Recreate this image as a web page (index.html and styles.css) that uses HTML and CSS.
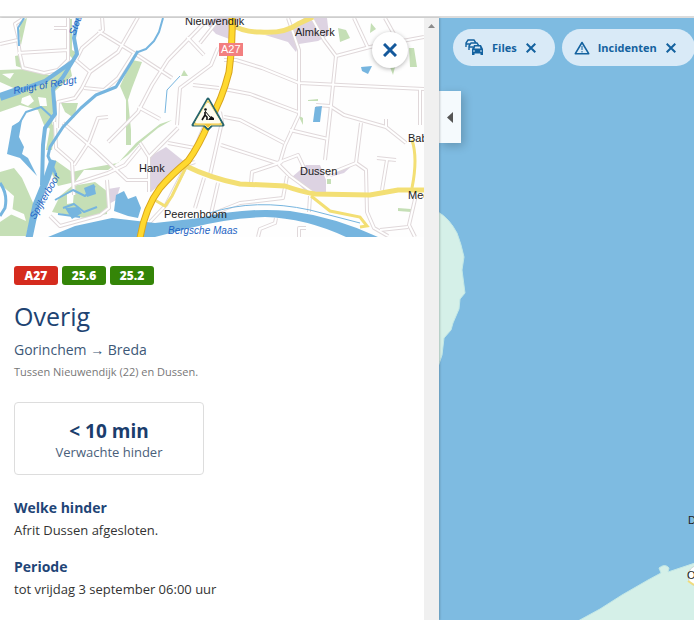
FILE: index.html
```html
<!DOCTYPE html>
<html lang="nl">
<head>
    <meta charset="UTF-8">
    <meta name="viewport" content="width=device-width, initial-scale=1.0">
    <title>Verkeersinformatie</title>
    <link rel="stylesheet" href="styles.css">
</head>
<body>

    <header class="topbar"></header>

    <main class="layout">
        <aside class="panel">
            <div class="panel-content">
                <div class="minimap">
                    <svg class="minimap-svg" viewBox="0 18 424 219" role="img" aria-label="Kaart A27 bij Hank">
                        <defs>
                            <g id="roads">
                                <path d="M102 17L103 30L82 48L76 60L90 72L82 88L75 98L58 102L57 128"/>
                                <path d="M98 31L134 53L172 78M138 17L118 52L90 72M134 53L118 78L104 90L84 88"/>
                                <path d="M0 44L18 40L20 55L23 68L44 73L58 70L68 60V18M18 53L68 50M24 18L15 24L19 40M54 28H68"/>
                                <path d="M204 23L168 60L152 85L138 112L108 142M187 37L204 55"/>
                                <path d="M218 48L211 65L180 88L177 125M193 85L219 88"/>
                                <path d="M138 107L160 119M108 117L98 118L89 142L74 165M55 122L56 148L72 162L74 195"/>
                                <path d="M63 123L95 150L127 180L150 180M74 184L108 173L125 165L140 147"/>
                                <path d="M107 180L109 208L100 215L60 226L50 216M140 143L149 157L149 192"/>
                                <path d="M149 157L178 128M168 143L195 148L212 108M177 168L195 162"/>
                                <path d="M200 43L216 23M288 18L299 50L299 85L299 115L285 145L279 165L290 176L312 192"/>
                                <path d="M224 60L236 60L262 68L299 83L424 89M224 89L250 94L298 112M220 112L222 122L210 175"/>
                                <path d="M324 40L336 56L333 85L330 115L325 160M336 56L370 47L424 37"/>
                                <path d="M312 18L324 40M354 18L368 48M385 18L395 36M420 89V125"/>
                                <path d="M316 105L330 106L344 115L386 127L406 143M386 119V128M361 123L356 163L326 175"/>
                                <path d="M221 145L277 163L298 155L305 170M290 130L328 139M224 117L240 120L284 143"/>
                                <path d="M251 183L252 172L282 162M356 163L366 170L367 212L374 228L388 236"/>
                                <path d="M377 158L396 160M387 160L382 190M416 195L409 225L415 237M408 227L380 230"/>
                                <path d="M310 196L309 212M287 176L283 198L240 203L212 214M218 183L211 214"/>
                                <path d="M258 237L260 229L275 223L276 218M299 237L299 228L306 228"/>
                                <path d="M185 168L166 205L150 222M204 178L195 208"/>
                            </g>
                            <path id="a27" d="M232 17Q233 45 229 72Q222 100 209 122Q199 146 188 161Q171 175 160 188Q145 208 140 238"/>
                        </defs>

                        <rect y="17" width="424" height="221" fill="#fefefe"/>

                        <g class="green">
                            <path d="M0 70L30 69L52 76L70 66L72 76L54 92L52 130L44 125L38 110L20 105L0 112L0 97L18 90L0 82Z"/>
                            <path d="M0 172L14 168L22 178L34 205L26 236H0V222L12 214L14 196L0 184Z"/>
                            <path d="M132 60L142 62L132 88L128 100L131 130L131 145L126 145L126 100L120 86Z"/>
                            <path d="M172 120L158 128L140 143L128 155L108 170L84 170L75 182L58 186L50 170L55 160L72 172L90 168L118 163L136 143L160 124Z"/>
                            <path d="M72 186L95 182L108 192L107 214L84 218L52 212L60 196Z"/>
                            <path d="M338 28L346 30L350 38L340 42ZM371 23L376 29L370 33ZM409 48H414L417 67H410ZM390 67H395L393 75Z"/>
                            <path d="M181 76L184 70L188 76ZM61 103L78 103L74 118L65 112ZM15 56L20 55L22 68L16 66ZM22 20L27 18L21 45L17 38Z"/>
                            <path d="M298 115L303 118V125ZM308 100L318 99V101H308ZM327 179H331V184H327ZM398 208L411 209V212L398 211Z"/>
                            <path d="M66 19H72L72 50L79 54L74 60L66 52ZM50 128L56 120L52 150L46 150Z"/>
                        </g>
                        <g fill="#fefefe">
                            <path d="M22 98L30 95L34 101L28 106L21 103ZM38 97L46 98L47 106L40 106ZM2 74L14 73L10 79Z"/>
                            <path d="M67 194L74 191L73 203L67 204ZM5 206L24 214L26 221L8 213Z"/>
                        </g>
                        <g class="town">
                            <path d="M149 157L166 147L186 163L168 178L151 192Z"/>
                            <path d="M205 22L218 17H240L232 40L216 34Z"/>
                            <path d="M265 35L284 32L304 18H327L329 35L318 41L299 44L296 52L288 42Z"/>
                            <path d="M292 177L306 165H320L326 180V194L306 192ZM341 169L355 163L344 173L330 177ZM108 189L120 187L116 200L109 204Z"/>
                        </g>

                        <use href="#roads" class="road-edge"/>
                        <use href="#roads" class="road"/>

                        <g class="water-line">
                            <path stroke-width="4" d="M78 17L74 38L77 54L63 77L53 89L55 114L45 128L43 145L42 185"/>
                            <path stroke-width="7" d="M53 160L47 178L36 205L29 238"/>
                            <path stroke-width="8" d="M0 97L20 90"/>
                            <path stroke-width="4" d="M18 91L45 81L72 62"/>
                            <path stroke-width="2" d="M163 18L159 32L154 41L146 49L138 52"/>
                            <path stroke-width="3" d="M138 51L129 66L116 87L96 95L81 108L63 127L50 147L48 156L56 175"/>
                            <path stroke-width="2" d="M24 18L18 28L19 46M16 129L26 112L41 107L53 118"/>
                            <path stroke-width="1" d="M180 76L167 90L165 113M210 213Q255 198 310 210L360 223"/>
                            <path stroke-width="2" d="M55 200L73 190L85 196L95 186M63 208L74 204L84 212L97 207M58 214L80 217"/>
                            <path stroke-width="3" d="M0 183Q8 194 5 208L0 216"/>
                        </g>
                        <g class="water">
                            <path d="M12 126L22 120L19 137L24 147L22 154L28 158L37 176L20 158L7 154Z"/>
                            <path d="M116 195L124 191L128 199L136 196L141 208L138 218L128 216L114 211Z"/>
                            <path d="M84 188L94 184L96 194L87 197ZM65 208L78 207L82 213L72 219Z"/>
                            <path d="M315 107L322 106L320 122L313 122ZM361 67L372 66L368 74L362 71Z"/>
                            <path d="M48 237L75 226L112 218L155 223L200 218Q245 207 290 211Q335 217 378 237H346Q305 218 265 217Q228 218 190 228L155 237Z"/>
                        </g>

                        <g class="main-road">
                            <path d="M231 24Q242 32 260 32Q284 34 298 24L313 17"/>
                            <path d="M186 166Q210 178 240 184L285 186Q302 192 315 194L370 195L398 190H424"/>
                            <path class="thin" d="M186 167L172 196L165 206L153 199M311 196L330 211L360 217L367 226L360 227M412 140Q418 158 412 188"/>
                        </g>
                        <use href="#a27" class="highway-edge"/>
                        <use href="#a27" class="highway"/>

                        <rect x="219" y="43" width="24" height="13" fill="#f27f80"/>
                        <text class="road-label" x="221" y="53">A27</text>

                        <g class="place">
                            <text x="185" y="25">Nieuwendijk</text>
                            <text x="295" y="36">Almkerk</text>
                            <text x="139" y="172">Hank</text>
                            <text x="300" y="175">Dussen</text>
                            <text x="164" y="218">Peerenboom</text>
                            <text x="408" y="142">Babyloniënbroek</text>
                            <text x="408" y="199">Meeuwen</text>
                        </g>
                        <g class="river">
                            <text x="168" y="234">Bergsche Maas</text>
                            <text transform="translate(14 94) rotate(-10)">Ruigt of Reugt</text>
                            <text transform="translate(35 220) rotate(-60)">Spijkerboor</text>
                            <text transform="translate(75 36) rotate(-70)">Steurgat</text>
                        </g>

                        <g stroke-linejoin="round">
                            <path d="M208 99L223 125H212L208 129L204 125H193Z" fill="#28666e" stroke="#28666e" stroke-width="3"/>
                            <path d="M208 100L222 125H211L208 128L205 125H194Z" fill="#f3c63a" stroke="#f3e08a"/>
                            <path d="M208 104L219 122H197Z" fill="#fffdf0" stroke="#fffdf0" stroke-width="3"/>
                            <circle cx="205.500" cy="109.500" r="1.300" fill="#111"/>
                            <path d="M205 112L205 115L207 117V120M205 115L202 120" fill="none" stroke="#111" stroke-width="1.600"/>
                            <path d="M205 111L210 117" stroke="#111"/>
                            <path d="M208 120L211 116L214 118V120Z" fill="#111"/>
                        </g>
                    </svg>
                    <button class="close-button" aria-label="Sluiten">
                        <svg viewBox="0 0 14 14" width="14" height="14"><path d="M1 1L13 13M13 1L1 13" stroke="#14599c" stroke-width="3"/></svg>
                    </button>
                </div>

                <section class="details">
                    <div class="badges">
                        <span class="badge badge-road">A27</span>
                        <span class="badge">25.6</span>
                        <span class="badge">25.2</span>
                    </div>
                    <h1>Overig</h1>
                    <p class="route">Gorinchem → Breda</p>
                    <p class="location">Tussen Nieuwendijk (22) en Dussen.</p>

                    <div class="delay">
                        <strong>&lt; 10 min</strong>
                        <span>Verwachte hinder</span>
                    </div>

                    <h2>Welke hinder</h2>
                    <p class="text">Afrit Dussen afgesloten.</p>
                    <h2>Periode</h2>
                    <p class="text">tot vrijdag 3 september 06:00 uur</p>
                </section>
            </div>
            <div class="scrollbar">
                <svg viewBox="0 0 7 4" width="7" height="4"><path d="M0 4L3.5 0L7 4Z" fill="#8b8b8b"/></svg>
            </div>
        </aside>

        <section class="map">
            <svg class="map-svg" viewBox="439 18 255 602" preserveAspectRatio="xMinYMin slice" aria-hidden="true">
                <g fill="#d5f0e8" stroke="#c3e8e6">
                    <path d="M438 212Q449 218 457 233Q461 243 464 257L462 270L465 293L460 299L459 309L453 323L451 330L444 338L442 355L438 367Z"/>
                    <path d="M578 621L600 609L622 595L648 580L661 573L659 568Q665 563 669 568L668 572L695 563V621Z"/>
                </g>
                <circle cx="699" cy="576" r="11" fill="#fff" stroke="#ccd8d4"/>
                <path d="M688 581L694 585" stroke="#f1dc7c" stroke-width="2"/>
                <g class="place">
                    <text x="688" y="524">Den Oever</text>
                    <text x="687" y="579">Oosterland</text>
                </g>
            </svg>

            <div class="filters">
                <button class="filter">
                    <svg viewBox="0 0 19 17" width="19" height="17">
                        <path d="M1 8V4L3 1H9L11 4M1 5H5M4 11V7L6 4H12L14 7M4 8H8" fill="none" stroke="#14629f" stroke-width="1.400"/>
                        <path d="M7 10L9 6H16L18 10V16H15.500V14.500H9.500V16H7ZM9.500 9.500H15.500L14.800 7.500H10.200Z" fill="#14629f" fill-rule="evenodd"/>
                        <path d="M8 12H10M15 12H17" stroke="#d9eaf7"/>
                    </svg>
                    <span>Files</span>
                    <svg class="cross" viewBox="0 0 10 10" width="10" height="10"><path d="M0.700 0.700L9.300 9.300M9.300 0.700L0.700 9.300" stroke="#14629f" stroke-width="2"/></svg>
                </button>
                <button class="filter">
                    <svg viewBox="0 0 16 14" width="16" height="14">
                        <path d="M8 1.500L14.700 12.700H1.300Z" fill="none" stroke="#14629f" stroke-width="1.600" stroke-linejoin="round"/>
                        <path d="M8 5V9M8 10V11.500" stroke="#14629f"/>
                    </svg>
                    <span>Incidenten</span>
                    <svg class="cross" viewBox="0 0 10 10" width="10" height="10"><path d="M0.700 0.700L9.300 9.300M9.300 0.700L0.700 9.300" stroke="#14629f" stroke-width="2"/></svg>
                </button>
            </div>

            <button class="collapse" aria-label="Paneel inklappen">
                <svg viewBox="0 0 6 11" width="6" height="11"><path d="M6 0V11L0 5.500Z" fill="#555"/></svg>
            </button>
        </section>
    </main>

</body>
</html>
```
FILE: styles.css
```css
* {
    box-sizing: border-box;
}

body {
    margin: 0;
    height: 100vh;
    display: flex;
    flex-direction: column;
    overflow: hidden;
    background-color: #fff;
    font-family: "Open Sans", "Noto Sans", sans-serif;
    color: #333;
}

h1, h2, p {
    margin: 0;
}

button {
    border: none;
    padding: 0;
    cursor: pointer;
    font-family: inherit;
}

svg {
    display: block;
}

.topbar {
    flex: none;
    height: 18px;
    border-bottom: 2px solid #dcdcdc;
}

.layout {
    flex: 1;
    display: flex;
    min-height: 0;
}

/* Left panel */
.panel {
    flex: 0 0 439px;
    display: flex;
    z-index: 1;
    background-color: #fff;
    box-shadow: 1px 0 2px rgba(0, 0, 0, 0.2);
}

.panel-content {
    flex: 1;
    min-width: 0;
    overflow: hidden;
}

.scrollbar {
    width: 15px;
    padding: 6px 4px;
    background-color: #f0f0f0;
}

.minimap {
    position: relative;
}

.minimap-svg {
    width: 100%;
}

.green {
    fill: #c5dfb6;
}

.town {
    fill: #ddd3e2;
}

.water {
    fill: #76b5df;
}

.water-line {
    fill: none;
    stroke: #76b5df;
    stroke-linejoin: round;
}

.road-edge {
    fill: none;
    stroke: #e0d8da;
    stroke-width: 4px;
    stroke-linejoin: round;
}

.road {
    fill: none;
    stroke: #fff;
    stroke-width: 2px;
    stroke-linejoin: round;
}

.main-road {
    fill: none;
    stroke: #f3df74;
    stroke-width: 5px;
}

.main-road .thin {
    stroke-width: 3px;
}

.highway-edge {
    fill: none;
    stroke: #d9a51c;
    stroke-width: 7px;
}

.highway {
    fill: none;
    stroke: #ffd92f;
    stroke-width: 5px;
}

.place,
.river,
.road-label {
    font-family: "Liberation Sans", Arial, sans-serif;
    font-size: 11px;
    fill: #222;
}

.river {
    font-size: 10px;
    font-style: italic;
    fill: #1d63c4;
}

.road-label {
    fill: #fff;
}

.close-button {
    position: absolute;
    top: 14px;
    right: 16px;
    width: 36px;
    height: 36px;
    display: flex;
    align-items: center;
    justify-content: center;
    border-radius: 50%;
    background-color: #fff;
    box-shadow: 0 1px 4px rgba(0, 0, 0, 0.3);
}

/* Details */
.details {
    padding: 29px 14px;
}

.badges {
    display: flex;
    gap: 4px;
}

.badge {
    width: 44px;
    border-radius: 3px;
    background-color: #348507;
    color: #fff;
    font-size: 12px;
    font-weight: 800;
    line-height: 19px;
    text-align: center;
}

.badge-road {
    background-color: #d52b1e;
}

h1 {
    margin-top: 13px;
    font-size: 25px;
    font-weight: 400;
    line-height: 36px;
    color: #204372;
}

.route {
    margin-top: 6px;
    font-size: 14px;
    line-height: 20px;
    color: #3d5877;
}

.location {
    margin-top: 2px;
    font-size: 11px;
    line-height: 20px;
    color: #777;
}

.delay {
    width: 190px;
    margin-top: 20px;
    margin-bottom: 22px;
    padding: 16px 12px 12px;
    display: flex;
    flex-direction: column;
    border: 1px solid #ddd;
    border-radius: 4px;
    text-align: center;
    font-size: 13px;
    line-height: 19px;
    color: #4a607a;
}

.delay strong {
    font-size: 19px;
    line-height: 24px;
    color: #1b3d6d;
}

h2 {
    font-size: 14px;
    font-weight: 700;
    line-height: 22px;
    color: #1f4577;
}

.text {
    margin-bottom: 15px;
    font-size: 13px;
    line-height: 22px;
}

/* Main map */
.map {
    position: relative;
    flex: 1;
    min-width: 0;
    overflow: hidden;
    background-color: #7ebbe1;
}

.map-svg {
    position: absolute;
    inset: 0;
    width: 100%;
    height: 100%;
}

.filters {
    position: absolute;
    top: 11px;
    left: 14px;
    display: flex;
    gap: 7px;
}

.filter {
    height: 37px;
    padding: 0 19px 0 12px;
    display: flex;
    align-items: center;
    gap: 7px;
    border-radius: 19px;
    background-color: #d9eaf7;
    color: #14629f;
    font-size: 11px;
    font-weight: 700;
}

.filter span {
    margin-left: 1px;
}

.cross {
    margin-left: 2px;
}

.collapse {
    position: absolute;
    top: 73px;
    left: 0;
    width: 22px;
    height: 52px;
    display: flex;
    align-items: center;
    justify-content: center;
    background-color: #f5fafd;
    box-shadow: 3px 3px 10px rgba(0, 0, 0, 0.2);
}
```
